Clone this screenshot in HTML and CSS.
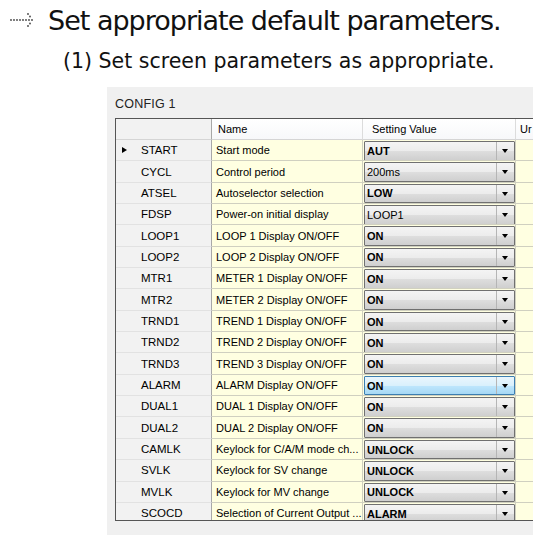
FILE: index.html
```html
<!DOCTYPE html>
<html>
<head>
<meta charset="utf-8">
<link rel="stylesheet" href="styles.css">
</head>
<body>
<div class="title">
  <svg class="arrow" width="26" height="18" viewBox="0 0 26 18">
    <g fill="#444">
      <circle cx="2" cy="9" r="0.9"/><circle cx="5" cy="9" r="0.9"/><circle cx="8" cy="9" r="0.9"/><circle cx="11" cy="9" r="0.9"/><circle cx="14" cy="9" r="0.9"/><circle cx="17" cy="9" r="0.9"/><circle cx="20" cy="9" r="0.9"/>
      <circle cx="19" cy="3" r="0.9"/><circle cx="21" cy="5.5" r="0.9"/><circle cx="23" cy="9" r="0.9"/><circle cx="21" cy="12.5" r="0.9"/><circle cx="19" cy="15" r="0.9"/>
    </g>
  </svg>
  <span>Set appropriate default parameters.</span>
</div>
<div class="sub">(1) Set screen parameters as appropriate.</div>
<div class="panel">
  <div class="caption">CONFIG 1</div>
  <div class="grid">
    <div class="row head">
      <div class="rh"></div>
      <div class="c name">Name</div>
      <div class="c set">Setting Value</div>
      <div class="c unit">Ur</div>
    </div>
    <div class="row"><div class="rh"><span class="ptr"></span>START</div><div class="c name">Start mode</div><div class="c set"><div class="combo"><span class="val b">AUT</span><span class="btn"></span></div></div><div class="c unit"></div></div>
    <div class="row"><div class="rh">CYCL</div><div class="c name">Control period</div><div class="c set"><div class="combo"><span class="val">200ms</span><span class="btn"></span></div></div><div class="c unit"></div></div>
    <div class="row"><div class="rh">ATSEL</div><div class="c name">Autoselector selection</div><div class="c set"><div class="combo"><span class="val b">LOW</span><span class="btn"></span></div></div><div class="c unit"></div></div>
    <div class="row"><div class="rh">FDSP</div><div class="c name">Power-on initial display</div><div class="c set"><div class="combo"><span class="val">LOOP1</span><span class="btn"></span></div></div><div class="c unit"></div></div>
    <div class="row"><div class="rh">LOOP1</div><div class="c name">LOOP 1 Display ON/OFF</div><div class="c set"><div class="combo"><span class="val b">ON</span><span class="btn"></span></div></div><div class="c unit"></div></div>
    <div class="row"><div class="rh">LOOP2</div><div class="c name">LOOP 2 Display ON/OFF</div><div class="c set"><div class="combo"><span class="val b">ON</span><span class="btn"></span></div></div><div class="c unit"></div></div>
    <div class="row"><div class="rh">MTR1</div><div class="c name">METER 1 Display ON/OFF</div><div class="c set"><div class="combo"><span class="val b">ON</span><span class="btn"></span></div></div><div class="c unit"></div></div>
    <div class="row"><div class="rh">MTR2</div><div class="c name">METER 2 Display ON/OFF</div><div class="c set"><div class="combo"><span class="val b">ON</span><span class="btn"></span></div></div><div class="c unit"></div></div>
    <div class="row"><div class="rh">TRND1</div><div class="c name">TREND 1 Display ON/OFF</div><div class="c set"><div class="combo"><span class="val b">ON</span><span class="btn"></span></div></div><div class="c unit"></div></div>
    <div class="row"><div class="rh">TRND2</div><div class="c name">TREND 2 Display ON/OFF</div><div class="c set"><div class="combo"><span class="val b">ON</span><span class="btn"></span></div></div><div class="c unit"></div></div>
    <div class="row"><div class="rh">TRND3</div><div class="c name">TREND 3 Display ON/OFF</div><div class="c set"><div class="combo"><span class="val b">ON</span><span class="btn"></span></div></div><div class="c unit"></div></div>
    <div class="row"><div class="rh">ALARM</div><div class="c name">ALARM Display ON/OFF</div><div class="c set"><div class="combo hover"><span class="val b">ON</span><span class="btn"></span></div></div><div class="c unit"></div></div>
    <div class="row"><div class="rh">DUAL1</div><div class="c name">DUAL 1 Display ON/OFF</div><div class="c set"><div class="combo"><span class="val b">ON</span><span class="btn"></span></div></div><div class="c unit"></div></div>
    <div class="row"><div class="rh">DUAL2</div><div class="c name">DUAL 2 Display ON/OFF</div><div class="c set"><div class="combo"><span class="val b">ON</span><span class="btn"></span></div></div><div class="c unit"></div></div>
    <div class="row"><div class="rh">CAMLK</div><div class="c name">Keylock for C/A/M mode ch...</div><div class="c set"><div class="combo"><span class="val b">UNLOCK</span><span class="btn"></span></div></div><div class="c unit"></div></div>
    <div class="row"><div class="rh">SVLK</div><div class="c name">Keylock for SV change</div><div class="c set"><div class="combo"><span class="val b">UNLOCK</span><span class="btn"></span></div></div><div class="c unit"></div></div>
    <div class="row"><div class="rh">MVLK</div><div class="c name">Keylock for MV change</div><div class="c set"><div class="combo"><span class="val b">UNLOCK</span><span class="btn"></span></div></div><div class="c unit"></div></div>
    <div class="row"><div class="rh">SCOCD</div><div class="c name">Selection of Current Output ...</div><div class="c set"><div class="combo"><span class="val b">ALARM</span><span class="btn"></span></div></div><div class="c unit"></div></div>
  </div>
</div>
</body>
</html>
```
FILE: styles.css
```css
html, body {
  margin: 0;
  padding: 0;
  background: #fff;
  overflow: hidden;
}
body {
  width: 545px;
  height: 535px;
  font-family: "Liberation Sans", Arial, sans-serif;
  color: #000;
}
.title {
  display: flex;
  align-items: center;
  height: 40px;
  padding-left: 9px;
  font-family: "DejaVu Sans", Verdana, sans-serif;
  font-size: 27px;
  color: #111;
  letter-spacing: -1px;
}
.title .arrow {
  margin-right: 13px;
  margin-top: 0;
}
.sub {
  font-family: "DejaVu Sans", Verdana, sans-serif;
  font-size: 20.5px;
  color: #111;
  padding-left: 63px;
  height: 42px;
  line-height: 42px;
}
.panel {
  margin-left: 107px;
  margin-top: 5px;
  width: 426px;
  height: 448px;
  background: #f0f0f0;
  overflow: hidden;
  padding-left: 8px;
  box-sizing: border-box;
}
.caption {
  font-size: 12.5px;
  height: 31px;
  padding-top: 9px;
  line-height: 16px;
  box-sizing: border-box;
  color: #222;
  letter-spacing: 0.2px;
}
.grid {
  width: 470px;
  height: 403px;
  overflow: hidden;
  border: 1px solid #555;
  border-right: none;
  box-sizing: border-box;
  background: #fff;
}
.row {
  display: grid;
  grid-template-columns: 96px 151px 153px 60px;
  height: 21.35px;
  box-sizing: border-box;
}
.row.head {
  height: 21px;
}
.rh {
  background: #f2f2f2;
  border-right: 1px solid #a8a8a8;
  border-bottom: 1px solid #e2e2e2;
  font-size: 11.5px;
  padding-left: 25px;
  display: flex;
  align-items: center;
  position: relative;
  box-sizing: border-box;
}
.ptr {
  position: absolute;
  left: 6px;
  top: 7px;
  width: 0;
  height: 0;
  border-top: 3.5px solid transparent;
  border-bottom: 3.5px solid transparent;
  border-left: 5px solid #000;
}
.c {
  font-size: 11px;
  display: flex;
  align-items: center;
  box-sizing: border-box;
  background: #ffffe1;
  border-right: 1px solid #d0d0c0;
  border-bottom: 1px solid #d0d0c0;
  white-space: nowrap;
  overflow: hidden;
}
.c.name {
  padding-left: 4px;
}
.head .rh {
  background: #f2f2f2;
  border-bottom: 1px solid #d5d5d5;
}
.head .c {
  background: linear-gradient(#ffffff, #f7f8fa);
  border-right: 1px solid #dcdcdc;
  border-bottom: 1px solid #d5d5d5;
}
.head .c.name {
  padding-left: 6px;
}
.head .c.unit {
  padding-left: 4px;
}
.row:not(.head) .c.set {
  padding: 1px 0 0 1px;
  align-items: stretch;
}
.head .c.set {
  padding-left: 9px;
}
.combo {
  flex: 1;
  display: flex;
  border: 1px solid #707070;
  border-radius: 1px;
  background: linear-gradient(#f4f4f4 0%, #ececec 50%, #dedede 51%, #cfcfcf 100%);
  box-sizing: border-box;
  height: 19.5px;
}
.combo.hover {
  border-color: #3c7fb1;
  background: linear-gradient(#eaf6fd 0%, #d9f0fc 50%, #bee6fd 51%, #a7d9f5 100%);
}
.val {
  flex: 1;
  padding-left: 2px;
  display: flex;
  align-items: center;
  font-size: 11px;
}
.val.b {
  font-weight: bold;
}
.btn {
  width: 17px;
  border-left: 1px solid #b5b5b5;
  position: relative;
}
.btn::after {
  content: "";
  position: absolute;
  left: 5px;
  top: 7px;
  border-left: 3.5px solid transparent;
  border-right: 3.5px solid transparent;
  border-top: 4px solid #000;
}
```
